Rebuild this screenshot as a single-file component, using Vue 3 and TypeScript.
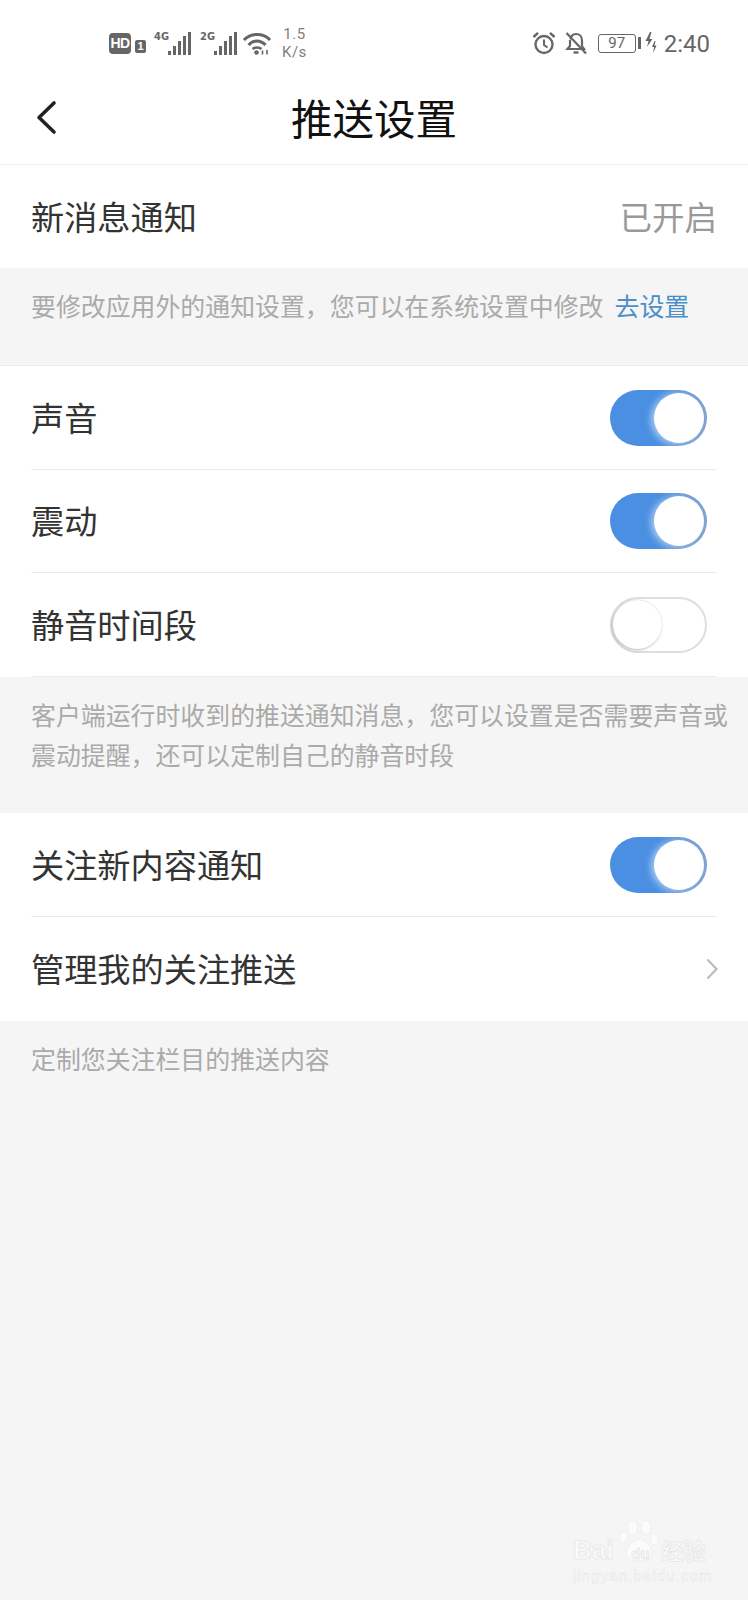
<script setup lang="ts">
import { ref } from 'vue';

const sound = ref(true);
const vibrate = ref(true);
const quiet = ref(false);
const follow = ref(true);
const barHeights = [4, 9, 14, 19, 23];
</script>

<template>
  <div class="page">
    <div class="status">
      <div class="status-left">
        <span class="hd">HD</span>
        <span class="sim">1</span>
        <span class="net">
          <span class="net-label">4G</span>
          <span class="bars"><i v-for="h in barHeights" :key="h" :style="{ height: h + 'px' }"></i></span>
        </span>
        <span class="net net-two">
          <span class="net-label">2G</span>
          <span class="bars"><i v-for="h in barHeights" :key="h" :style="{ height: h + 'px' }"></i></span>
        </span>
        <svg class="wifi" width="28" height="23" viewBox="0 0 28 23" fill="none" stroke="#666" stroke-width="3">
          <path d="M1 8C7.500 .5 20.500 .5 27 8" />
          <path d="M5.500 13C10.500 7.500 17.500 7.500 22.500 13" />
          <path d="M9.500 17C12 15 16 15 18.500 17" stroke-width="2.600" />
          <circle cx="13.500" cy="20.500" r="2.300" fill="#666" stroke="none" />
          <path d="M19.500 18.500v4M24 18v4.500" stroke-width="1.600" />
        </svg>
        <span class="speed"><span>1.5</span><span>K/s</span></span>
      </div>
      <div class="status-right">
        <svg width="24" height="24" viewBox="0 0 24 24" fill="none" stroke="#666" stroke-width="2.400">
          <circle cx="12" cy="13.500" r="8.500" />
          <path d="M12 8.500v5.500l3.500 2.500" stroke-width="2" />
          <path d="M1.500 6 6 1.800M22.500 6 18 1.800" stroke-width="2.400" />
        </svg>
        <svg class="bell" width="24" height="24" viewBox="0 0 24 24" fill="none" stroke="#666" stroke-width="2.200">
          <path d="M6.500 8.500c.5-3.500 2.800-5.500 5.500-5.500 3.500 0 6 2.800 6 6.500v5.500l2 3H3.500l2.500-3V9" />
          <path d="M9.500 21.500h5" stroke-width="2.400" />
          <path d="M2.500 2 22 22.500" />
        </svg>
        <span class="battery">97</span>
        <span class="nub"></span>
        <svg class="bolt" width="12" height="22" viewBox="0 0 12 22" fill="#666">
          <path d="M5 0 0.500 9h3L2 15l5.500-8h-3L6.500 0z" />
          <path d="M9.500 9 7 15h2l-.8 6 3.300-7.500H9.500l1-4.500z" />
        </svg>
        <span class="time">2:40</span>
      </div>
    </div>

    <header class="titlebar">
      <svg class="back" width="24" height="38" viewBox="0 0 24 38" fill="none" stroke="#222" stroke-width="3.600" stroke-linecap="round" stroke-linejoin="round">
        <path d="M20 5 5 19.500 20 34" />
      </svg>
      <h1>推送设置</h1>
    </header>

    <section class="group">
      <div class="row row-short">
        <span class="label">新消息通知</span>
        <span class="label value">已开启</span>
      </div>
    </section>
    <p class="hint hint-one">要修改应用外的通知设置，您可以在系统设置中修改<a class="link">去设置</a></p>

    <section class="group bordered">
      <div class="row line">
        <span class="label">声音</span>
        <button class="toggle" :class="{ on: sound }" @click="sound = !sound"><span class="knob"></span></button>
      </div>
      <div class="row row-short line">
        <span class="label">震动</span>
        <button class="toggle" :class="{ on: vibrate }" @click="vibrate = !vibrate"><span class="knob"></span></button>
      </div>
      <div class="row line">
        <span class="label">静音时间段</span>
        <button class="toggle" :class="{ on: quiet }" @click="quiet = !quiet"><span class="knob"></span></button>
      </div>
    </section>
    <p class="hint hint-two">客户端运行时收到的推送通知消息，您可以设置是否需要声音或震动提醒，还可以定制自己的静音时段</p>

    <section class="group">
      <div class="row line">
        <span class="label">关注新内容通知</span>
        <button class="toggle" :class="{ on: follow }" @click="follow = !follow"><span class="knob"></span></button>
      </div>
      <div class="row">
        <span class="label">管理我的关注推送</span>
        <svg class="chevron" width="12" height="24" viewBox="0 0 12 24" fill="none" stroke="#bbb" stroke-width="2.200">
          <path d="M1.500 2.500 10.500 12l-9 9.500" />
        </svg>
      </div>
    </section>
    <p class="hint hint-three">定制您关注栏目的推送内容</p>

    <div class="watermark">
      <svg class="paw" width="40" height="44" viewBox="0 0 44 48" fill="#fbfbfb" stroke="#ececec" stroke-width="1">
        <ellipse cx="15" cy="9" rx="5.500" ry="8" />
        <ellipse cx="30" cy="9" rx="5.500" ry="8" />
        <ellipse cx="5" cy="20" rx="4.500" ry="6" />
        <ellipse cx="39" cy="22" rx="4.500" ry="6" />
        <path d="M22 22c7 0 14 8 14 15 0 6-4 9-14 9S8 43 8 37c0-7 7-15 14-15z" />
      </svg>
      <div class="mark-line">
        <span class="mark-bai">Bai</span><span class="mark-du">du</span><span class="mark-cn">经验</span>
      </div>
      <div class="mark-url">jingyan.baidu.com</div>
    </div>
  </div>
</template>

<style>
html,
body {
  margin: 0;
  background: #f5f5f5;
}
</style>

<style scoped>
.page {
  position: relative;
  width: 748px;
  height: 1600px;
  overflow: hidden;
  background: #f5f5f5;
  color: #333;
  font-family: "Noto Sans CJK SC", "Noto Sans", sans-serif;
}

.status {
  height: 78px;
  box-sizing: border-box;
  padding: 25px 38px 0 109px;
  display: flex;
  justify-content: space-between;
  background: #fff;
  color: #666;
}

.status-left,
.status-right {
  display: flex;
  align-items: center;
  height: 36px;
}

.hd {
  width: 22px;
  height: 21px;
  border-radius: 4px;
  background: #666;
  color: #fff;
  font: bold 14px/21px "Liberation Sans", sans-serif;
  letter-spacing: -0.5px;
  text-align: center;
}

.sim {
  width: 11px;
  height: 13px;
  margin: 6px 0 0 4px;
  border-radius: 2px;
  background: #666;
  color: #fff;
  font: bold 11px/13px "Liberation Sans", sans-serif;
  text-align: center;
}

.net {
  position: relative;
  display: flex;
  align-items: flex-end;
  justify-content: flex-end;
  width: 37px;
  height: 24px;
  margin-left: 8px;
}

.net-two {
  margin-left: 9px;
}

.net-label {
  position: absolute;
  left: 0;
  top: 0;
  font: bold 11px/12px "DejaVu Sans Condensed", "Liberation Sans", sans-serif;
}

.bars {
  display: flex;
  align-items: flex-end;
  gap: 2px;
}

.bars i {
  display: block;
  width: 3px;
  background: #666;
}

.wifi {
  margin-left: 6px;
}

.speed {
  display: flex;
  flex-direction: column;
  align-items: center;
  margin-left: 11px;
  font: 15px/18px "Roboto", sans-serif;
  color: #808080;
  letter-spacing: 0.5px;
}

.bell {
  margin-left: 8px;
}

.battery {
  width: 38px;
  height: 19px;
  margin-left: 10px;
  box-sizing: border-box;
  border: 1px solid #666;
  border-radius: 3px;
  font: 15px/17px "Roboto", sans-serif;
  text-align: center;
}

.nub {
  width: 3px;
  height: 12px;
  margin-left: 2px;
  background: #666;
}

.bolt {
  margin-left: 4px;
}

.time {
  margin: 1px 0 0 7px;
  font: 24px/28px "Roboto", sans-serif;
  color: #666;
}

.titlebar {
  position: relative;
  height: 87px;
  box-sizing: border-box;
  border-bottom: 1px solid #ececec;
  background: #fff;
  display: flex;
  align-items: center;
  justify-content: center;
}

.titlebar h1 {
  margin: 0 0 8px;
  font-size: 41.500px;
  font-weight: 400;
  line-height: 60px;
  color: #111;
}

.back {
  position: absolute;
  left: 34px;
  top: 20px;
}

.group {
  background: #fff;
}

.bordered {
  border-top: 1px solid #ececec;
}

.row {
  height: 104px;
  margin: 0 31px;
  display: flex;
  align-items: center;
  justify-content: space-between;
  box-sizing: border-box;
  font-size: 33.200px;
  color: #333;
}

.row-short {
  height: 103px;
}

.line {
  border-bottom: 1px solid #ebebeb;
}

.label {
  padding-bottom: 3px;
}

.value {
  color: #999;
  font-size: 32.500px;
}

.toggle {
  position: relative;
  flex: none;
  width: 97px;
  height: 56px;
  margin-right: 10px;
  padding: 0;
  box-sizing: border-box;
  border: 2px solid #dedede;
  border-radius: 28px;
  background: #fff;
  cursor: pointer;
}

.toggle.on {
  border: none;
  background: linear-gradient(90deg, #4a8fe2 50%, #7d9fcf 100%);
}

.knob {
  position: absolute;
  top: 1px;
  left: 1px;
  width: 49px;
  height: 49px;
  border-radius: 50%;
  background: #fff;
  box-shadow: -1px 1px 3px rgba(0, 0, 0, 0.25), 0 0 1px rgba(0, 0, 0, 0.2);
}

.toggle.on .knob {
  top: 3px;
  left: 44px;
  width: 50px;
  height: 50px;
  box-shadow: -3px 1px 7px rgba(255, 255, 255, 0.55);
}

.hint {
  margin: 0;
  padding: 0 16px 0 31px;
  font-size: 24.900px;
  line-height: 40px;
  color: #aaa;
}

.hint-one {
  height: 97px;
  padding-top: 17px;
  box-sizing: border-box;
  white-space: nowrap;
}

.hint-two {
  height: 136px;
  padding-top: 17px;
  box-sizing: border-box;
}

.hint-three {
  padding-top: 17px;
}

.link {
  margin-left: 11px;
  color: #4a8fc9;
}

.chevron {
  margin-right: -1px;
}

.watermark {
  position: absolute;
  left: 573px;
  top: 1517px;
  width: 140px;
  height: 70px;
  font-family: "Liberation Sans", sans-serif;
  color: #fbfbfb;
}

.paw {
  position: absolute;
  left: 46px;
  top: 2px;
}

.mark-line {
  position: absolute;
  left: 0;
  top: 17px;
  display: flex;
  align-items: baseline;
  white-space: nowrap;
  -webkit-text-stroke: 1px #e9e9e9;
}

.mark-bai {
  font-size: 26px;
  font-weight: 700;
  line-height: 30px;
}

.mark-du {
  position: relative;
  width: 22px;
  margin-left: 16px;
  text-align: center;
  font-size: 15px;
  font-weight: 700;
}

.mark-cn {
  margin-left: 10px;
  font-family: "Noto Sans CJK SC", sans-serif;
  font-size: 22px;
  line-height: 30px;
  font-weight: 700;
}

.mark-url {
  position: absolute;
  left: 0;
  top: 50px;
  font-size: 15px;
  line-height: 17px;
  letter-spacing: 1.100px;
  white-space: nowrap;
  -webkit-text-stroke: 0.5px #e6e6e6;
}
</style>
